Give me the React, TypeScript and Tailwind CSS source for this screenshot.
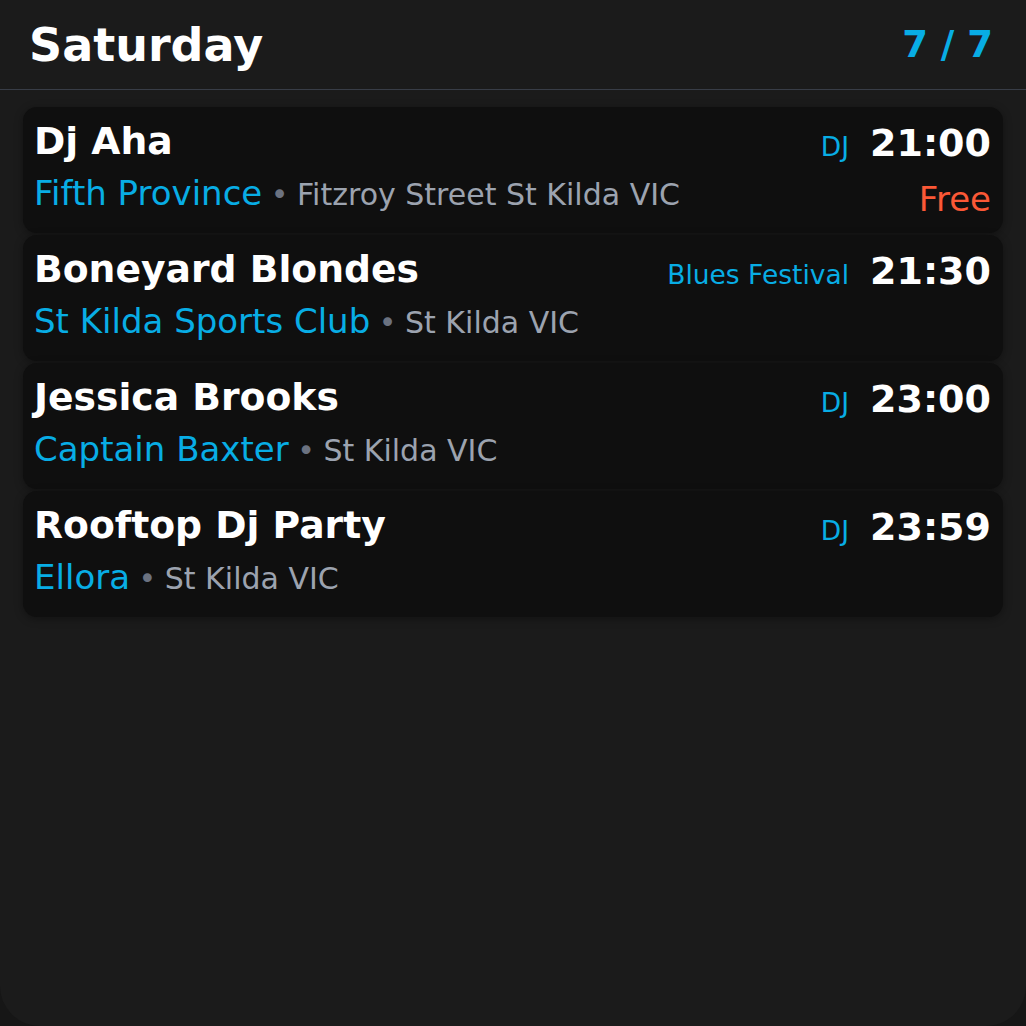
const events = [
  { title: 'Dj Aha', venue: 'Fifth Province', place: 'Fitzroy Street St Kilda VIC', tag: 'DJ', time: '21:00', price: 'Free' },
  { title: 'Boneyard Blondes', venue: 'St Kilda Sports Club', place: 'St Kilda VIC', tag: 'Blues Festival', time: '21:30' },
  { title: 'Jessica Brooks', venue: 'Captain Baxter', place: 'St Kilda VIC', tag: 'DJ', time: '23:00' },
  { title: 'Rooftop Dj Party', venue: 'Ellora', place: 'St Kilda VIC', tag: 'DJ', time: '23:59' },
];

export default function App() {
  return (
    <div className="w-[1026px] h-[1026px] bg-[#161616]" style={{ fontFamily: '"DejaVu Sans", sans-serif' }}>
      <div className="h-full bg-[#1b1b1b] rounded-b-[40px] flex flex-col">
        <header className="h-[90px] pl-[29px] pr-[33px] flex items-center justify-between border-b border-[#383d47]">
          <h1 className="text-[46px] leading-[54px] font-bold text-white">Saturday</h1>
          <span className="text-[37px] leading-[44px] font-bold text-[#08ade5]">7 / 7</span>
        </header>

        <div className="px-[23px] pt-[17px] flex flex-col gap-[2px]">
          {events.map((ev) => (
            <div key={ev.title} className="h-[126px] rounded-[14px] bg-[#0f0f0f] shadow-[0_2px_8px_rgba(0,0,0,0.35)] pl-[11px] pr-[12px] pt-[12px] flex justify-between">
              <div className="flex flex-col gap-[10px]">
                <div className="text-[37.7px] leading-[44px] font-bold text-white">{ev.title}</div>
                <div className="leading-[40px] whitespace-nowrap">
                  <span className="text-[34px] text-[#08ade5]">{ev.venue}</span>
                  <span className="text-[30px] text-[#6b7280] mx-[-1px]"> • </span>
                  <span className="text-[30px] text-[#9ca3af]">{ev.place}</span>
                </div>
              </div>
              <div className="flex flex-col items-end gap-[10px] pt-[2px]">
                <div className="flex items-baseline gap-[21px] leading-[44px]">
                  <span className="text-[26.5px] text-[#08ade5]">{ev.tag}</span>
                  <span className="text-[38px] font-bold text-white">{ev.time}</span>
                </div>
                {ev.price && <div className="text-[34px] leading-[40px] text-[#fb5836]">{ev.price}</div>}
              </div>
            </div>
          ))}
        </div>
      </div>
    </div>
  );
}
